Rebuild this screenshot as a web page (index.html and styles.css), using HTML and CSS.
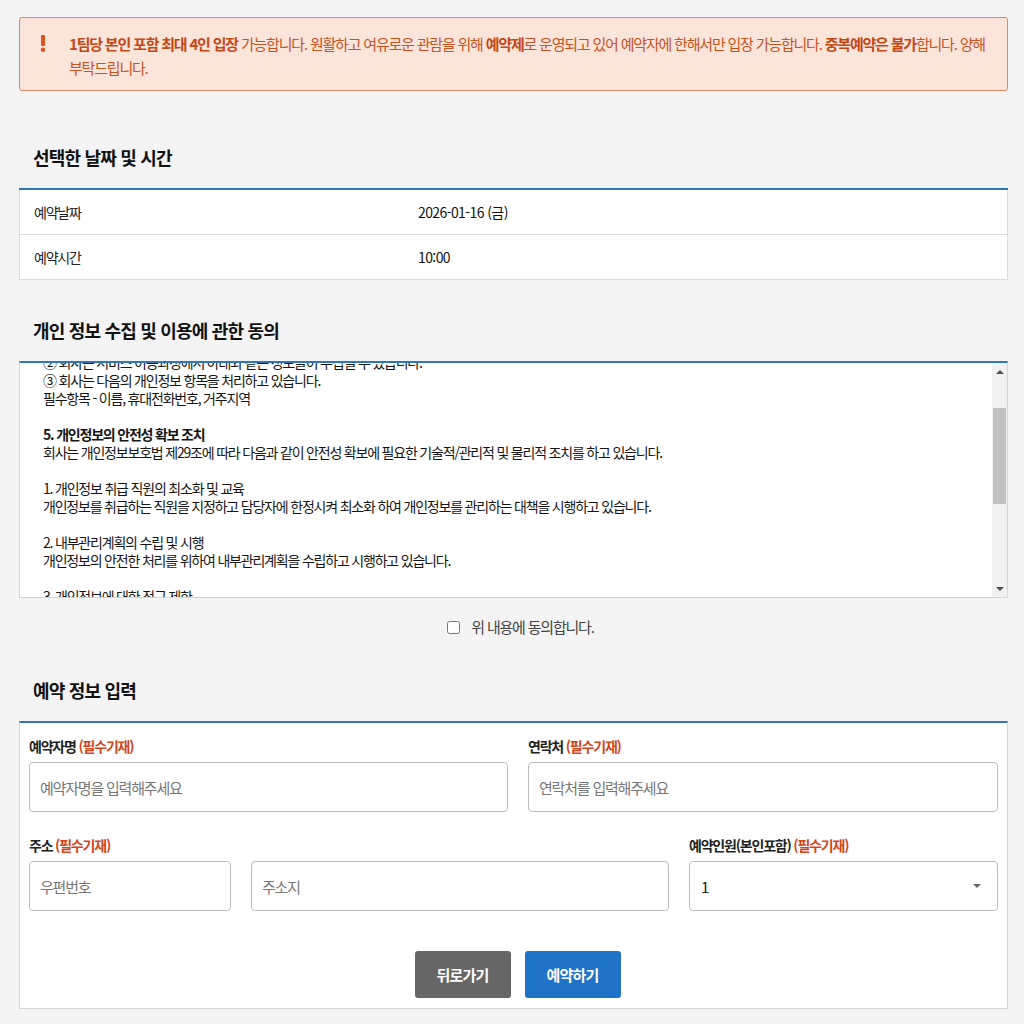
FILE: index.html
```html
<!DOCTYPE html>
<html lang="ko">

<head>
    <meta charset="UTF-8">
    <meta name="viewport" content="width=device-width, initial-scale=1.0">
    <title>관람 예약</title>
    <link rel="stylesheet" href="styles.css">
</head>

<body>

    <div class="notice">
        <span class="notice-icon">
            <svg width="6" height="17" viewBox="0 0 6 17">
                <rect x="1" y="0" width="4" height="11" rx="1" />
                <circle cx="3" cy="14.8" r="2.2" />
            </svg>
        </span>
        <p class="notice-text"><strong>1팀당 본인 포함 최대 4인 입장</strong> 가능합니다. 원활하고 여유로운 관람을 위해 <strong>예약제</strong>로 운영되고 있어 예약자에 한해서만 입장 가능합니다. <strong>중복예약은 불가</strong>합니다. 양해 부탁드립니다.</p>
    </div>

    <h2 class="section-title">선택한 날짜 및 시간</h2>
    <table class="info-table">
        <tr>
            <th>예약날짜</th>
            <td>2026-01-16 (금)</td>
        </tr>
        <tr>
            <th>예약시간</th>
            <td>10:00</td>
        </tr>
    </table>

    <h2 class="section-title">개인 정보 수집 및 이용에 관한 동의</h2>
    <div class="terms">
        <div class="terms-body" id="terms-body">
            <p><strong>4. 처리하는 개인정보의 항목</strong><br>
                회사는 관람 예약 서비스 제공을 위해 아래와 같이 개인정보를 처리하고 있습니다.</p>
            <p>① 회사는 예약 확인 및 입장 안내를 위하여 최소한의 개인정보를 수집합니다.<br>
                ② 회사는 서비스 이용과정에서 아래와 같은 정보들이 수집될 수 있습니다.<br>
                ③ 회사는 다음의 개인정보 항목을 처리하고 있습니다.<br>
                필수항목 - 이름, 휴대전화번호, 거주지역</p>
            <p><strong>5. 개인정보의 안전성 확보 조치</strong><br>
                회사는 개인정보보호법 제29조에 따라 다음과 같이 안전성 확보에 필요한 기술적/관리적 및 물리적 조치를 하고 있습니다.</p>
            <p>1. 개인정보 취급 직원의 최소화 및 교육<br>
                개인정보를 취급하는 직원을 지정하고 담당자에 한정시켜 최소화 하여 개인정보를 관리하는 대책을 시행하고 있습니다.</p>
            <p>2. 내부관리계획의 수립 및 시행<br>
                개인정보의 안전한 처리를 위하여 내부관리계획을 수립하고 시행하고 있습니다.</p>
            <p>3. 개인정보에 대한 접근 제한<br>
                개인정보를 처리하는 데이터베이스시스템에 대한 접근권한의 부여, 변경, 말소를 통하여 필요한 조치를 하고 있습니다.</p>
            <p>4. 접속기록의 보관 및 위변조 방지<br>
                개인정보처리시스템에 접속한 기록을 최소 1년 이상 보관, 관리하고 있으며, 위변조 및 도난, 분실되지 않도록 하고 있습니다.</p>
            <p><strong>6. 동의를 거부할 권리 및 불이익</strong><br>
                귀하는 개인정보 수집 및 이용에 대한 동의를 거부할 권리가 있습니다.<br>
                다만, 동의를 거부하실 경우 관람 예약이 제한될 수 있습니다.</p>
        </div>
        <div class="scrollbar">
            <span class="scroll-btn"><span class="arrow-up"></span></span>
            <div class="scroll-track">
                <div class="scroll-thumb"></div>
            </div>
            <span class="scroll-btn"><span class="arrow-down"></span></span>
        </div>
    </div>

    <label class="agree">
        <input type="checkbox">
        <span>위 내용에 동의합니다.</span>
    </label>

    <h2 class="section-title">예약 정보 입력</h2>
    <div class="form-card">
        <div class="form-row">
            <div class="field">
                <label for="name">예약자명 <span class="required">(필수기재)</span></label>
                <input type="text" id="name" placeholder="예약자명을 입력해주세요">
            </div>
            <div class="field">
                <label for="phone">연락처 <span class="required">(필수기재)</span></label>
                <input type="text" id="phone" placeholder="연락처를 입력해주세요">
            </div>
        </div>
        <div class="form-row address-row">
            <div class="field">
                <label for="zipcode">주소 <span class="required">(필수기재)</span></label>
                <div class="address-inputs">
                    <input type="text" id="zipcode" placeholder="우편번호">
                    <input type="text" id="address" placeholder="주소지">
                </div>
            </div>
            <div class="field">
                <label for="people">예약인원(본인포함) <span class="required">(필수기재)</span></label>
                <div class="select-wrap">
                    <select id="people">
                        <option>1</option>
                        <option>2</option>
                        <option>3</option>
                        <option>4</option>
                    </select>
                </div>
            </div>
        </div>
        <div class="buttons">
            <button class="btn btn-back">뒤로가기</button>
            <button class="btn btn-submit">예약하기</button>
        </div>
    </div>

    <script>
        document.getElementById('terms-body').scrollTop = 92;
    </script>

</body>

</html>
```

FILE: styles.css
```css
body {
    margin: 0;
    padding: 17px 16px 20px 19px;
    background-color: #f4f4f4;
    color: #222;
    font-family: "Noto Sans CJK KR", sans-serif;
    font-size: 14px;
    letter-spacing: -1.2px;
}

.notice {
    display: flex;
    gap: 23px;
    padding: 14px 8px 10px 20px;
    background-color: #fbe4da;
    border: 1px solid #e2875f;
    border-radius: 3px;
    color: #c9531f;
    margin-bottom: 53px;
}

.notice-icon {
    flex: none;
    padding-top: 3px;
    fill: #d9541e;
}

.notice-text {
    margin: 0;
    font-size: 15px;
    line-height: 24px;
}

.notice-text strong {
    color: #c44816;
}

.section-title {
    margin: 37px 0 18px;
    padding-left: 14px;
    font-size: 18px;
    line-height: 26px;
    letter-spacing: -0.8px;
    color: #111;
}

.info-table {
    width: 100%;
    border-collapse: collapse;
    background-color: #fff;
    border: 1px solid #dcdcdc;
    border-top: 2px solid #2f78b7;
}

.info-table th,
.info-table td {
    height: 44px;
    padding: 0 14px;
    text-align: left;
    font-weight: normal;
    border-bottom: 1px solid #dcdcdc;
}

.info-table th {
    width: 356px;
}

.info-table td {
    letter-spacing: -0.6px;
    color: #111;
}

/* 약관 박스 + 스크롤바 */
.terms {
    display: flex;
    height: 237px;
    box-sizing: border-box;
    background-color: #fff;
    border: 1px solid #d4d4d4;
    border-top: 2px solid #2f78b7;
    color: #151515;
}

.terms-body {
    flex: 1;
    overflow: hidden;
    padding: 10px 23px;
    line-height: 18px;
}

.terms-body p {
    margin: 0 0 18px;
}

.scrollbar {
    display: flex;
    flex-direction: column;
    width: 15px;
    background-color: #f1f1f1;
}

.scroll-btn {
    display: flex;
    justify-content: center;
    align-items: center;
    height: 17px;
}

.arrow-up,
.arrow-down {
    border-left: 4px solid transparent;
    border-right: 4px solid transparent;
}

.arrow-up {
    border-bottom: 4px solid #505050;
}

.arrow-down {
    border-top: 4px solid #505050;
}

.scroll-track {
    flex: 1;
    padding-top: 28px;
}

.scroll-thumb {
    height: 96px;
    margin: 0 1px;
    background-color: #c1c1c1;
}

.agree {
    display: flex;
    justify-content: center;
    align-items: center;
    gap: 11px;
    margin: 19px 0 40px;
    padding-left: 14px;
    line-height: 20px;
    font-size: 15px;
    color: #444;
}

.agree input {
    width: 13px;
    height: 13px;
    margin: 0;
}

.form-card {
    padding: 14px 9px 10px;
    background-color: #fff;
    border: 1px solid #d4d4d4;
    border-top: 2px solid #2f78b7;
}

.form-row {
    display: grid;
    grid-template-columns: 479px 1fr;
    gap: 20px;
    margin-bottom: 24px;
}

.address-row {
    grid-template-columns: 1fr 309px;
}

.address-inputs {
    display: grid;
    grid-template-columns: 202px 1fr;
    gap: 20px;
}

.field label {
    display: block;
    margin-bottom: 7px;
    line-height: 18px;
    font-weight: bold;
    color: #222;
}

.required {
    color: #d2461e;
}

.field input,
.field select {
    display: block;
    width: 100%;
    height: 50px;
    box-sizing: border-box;
    padding: 0 10px;
    border: 1px solid #bdbdbd;
    border-radius: 4px;
    background-color: #fff;
    font-family: inherit;
    font-size: 15px;
    letter-spacing: -1.2px;
    color: #222;
}

.field input::placeholder {
    color: #777;
}

.select-wrap {
    position: relative;
}

.field select {
    appearance: none;
    padding-left: 11px;
}

.select-wrap::after {
    content: "";
    position: absolute;
    right: 17px;
    top: 23px;
    border-left: 4px solid transparent;
    border-right: 4px solid transparent;
    border-top: 4px solid #666;
}

.buttons {
    display: flex;
    justify-content: center;
    gap: 14px;
    padding: 16px 0 0 8px;
}

.btn {
    width: 96px;
    height: 47px;
    border: none;
    border-radius: 3px;
    color: #fff;
    font-family: inherit;
    font-size: 15px;
    font-weight: bold;
    letter-spacing: -0.8px;
    cursor: pointer;
}

.btn-back {
    background-color: #666;
}

.btn-submit {
    background-color: #1f74c7;
}
```
